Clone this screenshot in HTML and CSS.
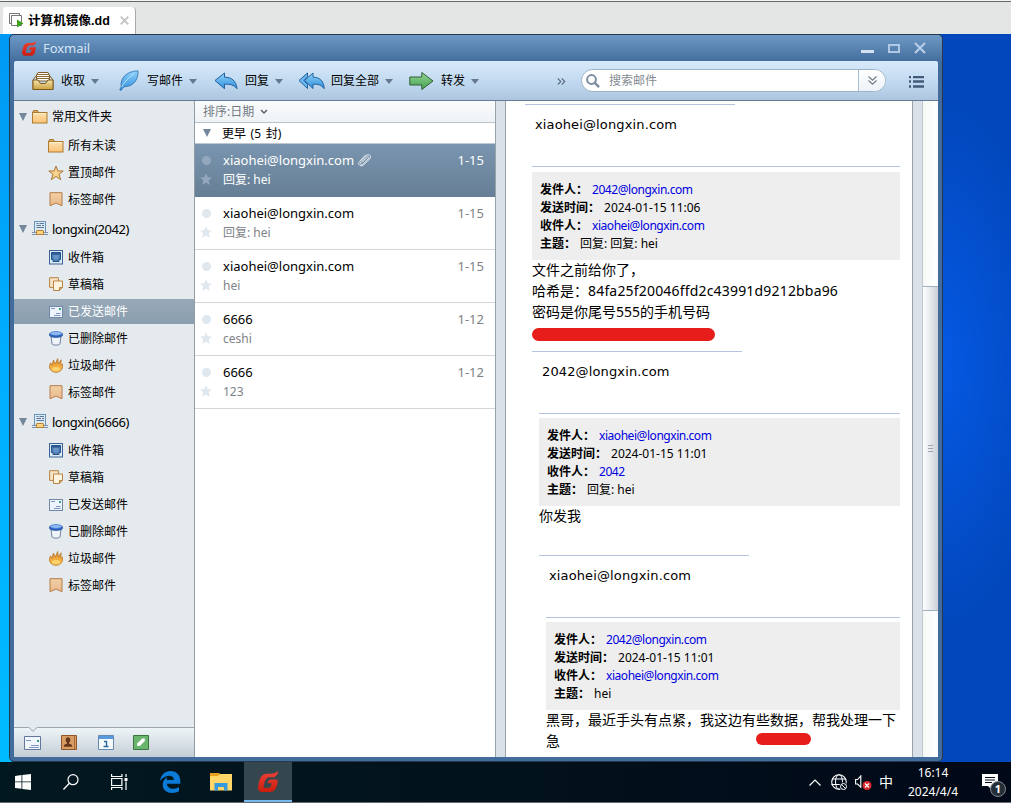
FILE: index.html
```html
<!DOCTYPE html>
<html lang="zh-CN">
<head>
<meta charset="utf-8">
<title>Foxmail</title>
<link rel="stylesheet" href="styles.css">
</head>
<body>
<svg class="defs" aria-hidden="true">
  <defs>
    <linearGradient id="gGold" x1="0" y1="0" x2="0" y2="1"><stop offset="0" stop-color="#fbe3b4"/><stop offset="1" stop-color="#fbc272"/></linearGradient>
    <linearGradient id="gTray" x1="0" y1="0" x2="0" y2="1"><stop offset="0" stop-color="#f3e3ac"/><stop offset="1" stop-color="#cda343"/></linearGradient>
    <linearGradient id="gBlue" x1="0" y1="0" x2="0" y2="1"><stop offset="0" stop-color="#8fd2fa"/><stop offset="1" stop-color="#2f8fdc"/></linearGradient>
    <linearGradient id="gGreen" x1="0" y1="0" x2="0" y2="1"><stop offset="0" stop-color="#94d594"/><stop offset="1" stop-color="#45a050"/></linearGradient>
    <linearGradient id="gTag" x1="0" y1="0" x2="0" y2="1"><stop offset="0" stop-color="#f1d0a4"/><stop offset="1" stop-color="#eab98d"/></linearGradient>
    <linearGradient id="gRed" x1="0" y1="0" x2="0" y2="1"><stop offset="0" stop-color="#ef4338"/><stop offset="1" stop-color="#c91c0c"/></linearGradient>
    <linearGradient id="gFire" x1="0" y1="0" x2="0" y2="1"><stop offset="0" stop-color="#d28a28"/><stop offset=".5" stop-color="#f2a83c"/><stop offset="1" stop-color="#fbc34f"/></linearGradient>
  </defs>
  <symbol id="fox" viewBox="0 0 20 21"><path fill="url(#gRed)" d="M20 0Q20.200 4 16.500 6.200H10.500Q8 7 6.800 10.500L5.600 15Q5.500 16.800 7 16.800H11Q12.800 16.600 13.600 12.300H9.500Q10 8.600 12.800 8.600H18.500Q20 8.700 19.700 10.500 18.600 21 12.500 21H3.500Q-.4 20.300.1 15.500 1.500 3 8 2.700H13.500Q17.500 2.500 20 0z"/></symbol>
  <symbol id="folder" viewBox="0 0 16 14"><path d="M1 2.500V1.500Q1 .5 2 .5H5.500L6.500 2.500z" fill="#dba95c" stroke="#a97a31"/><rect x=".5" y="2.500" width="14.500" height="10.500" fill="url(#gGold)" stroke="#ad7a2f"/><path d="M1.500 3.500h12.500" stroke="#fff0cd"/></symbol>
  <symbol id="star" viewBox="0 0 16 16"><path d="M8 1l1.900 5h5.300l-4.200 3.400 1.700 5.300L8 11.500l-4.700 3.200L5 9.400.8 6h5.300z" fill="#f8d18b" stroke="#a9793a"/></symbol>
  <symbol id="tag" viewBox="0 0 14 15"><path d="M1 .7h12v13l-6-2.600-6 2.600z" fill="url(#gTag)" stroke="#b77c49"/></symbol>
  <symbol id="account" viewBox="0 0 16 15"><rect x="2.500" y=".5" width="11" height="11" fill="#d9ebf8" stroke="#6b93b5"/><path d="M4.500 2.500h2M7.500 2.500H12M4.500 4.500H9M10 4.500h2M4.500 6.500H12" stroke="#5e7590"/><path d="M0 11.500h16M0 13.500h16" stroke="#7a92a9"/><rect x="4.500" y="9.500" width="7" height="4" rx=".6" fill="#ffd482" stroke="#c17d23"/></symbol>
  <symbol id="inbox" viewBox="0 0 14 15"><rect x=".5" y=".5" width="13" height="13.500" fill="#dceaf7" stroke="#3a6295"/><path d="M2.500 2.500h9v7H10v2H4v-2H2.500z" fill="#4a7ab0" stroke="#24528b"/><path d="M3 3h8v1.500H3z" fill="#2c5b94"/><path d="M4.500 5h5v4.500h-5z" fill="#6895c6"/></symbol>
  <symbol id="draft" viewBox="0 0 14 15"><path d="M.6.700h8.800v9.700H.6z" fill="#f6e4c5" stroke="#b78342"/><path d="M4.500 4h9v6.500l-3 3h-6z" fill="#fff4df" stroke="#b78342"/><path d="M13.300 10.500h-2.800v3" fill="#ddb074" stroke="#b78342"/></symbol>
  <symbol id="sent" viewBox="0 0 14 12"><rect x=".5" y=".5" width="13" height="11" fill="#edf4fb" stroke="#7187a8"/><path d="M2 2.500h4M7 7.500h4.500M5 9.500h6.500" stroke="#8094bc"/><path d="M10 2h2v2h-2z" fill="#3b9f80"/></symbol>
  <symbol id="trash" viewBox="0 0 14 15"><path d="M2 5l1 8c1 1.500 7 1.500 8 0l1-8z" fill="#eef4f9" stroke="#71859c"/><path d="M.7 2.500v2.300c2 2 10.600 2 12.600 0V2.500z" fill="#2c61bf" stroke="#315fab"/><ellipse cx="7" cy="2.500" rx="6" ry="1.900" fill="#91bdf5" stroke="#3f74c8" stroke-width=".8"/></symbol>
  <symbol id="fire" viewBox="0 0 14 15"><path d="M2.700 13C-.2 10.300.1 7.700 1.600 4.800l1.600 2.600L4.400 2l2 4L8.700.5l.6 5.400 2.900-4.100-.5 4.700 1.700-.5c.6 2.500.1 5.200-2.100 7-2.300 1.700-6.300 1.700-8.600 0z" fill="url(#gFire)" stroke="#b8772b" stroke-width=".8"/><ellipse cx="7" cy="11" rx="4" ry="2" fill="#ffd36e"/></symbol>
  <symbol id="reply" viewBox="0 0 24 20"><path d="M1 9.500L10.500 2v4.200c7 0 11.500 3.300 12.500 11.500-3.300-4-7-4.700-12.500-4.500v4.500z" fill="url(#gBlue)" stroke="#22619f" stroke-linejoin="round"/></symbol>
  <symbol id="mstar" viewBox="0 0 12 12"><path d="M6 0l1.700 4.200 4.300.2-3.300 2.800L9.800 12 6 9.400 2.200 12l1.100-4.800L0 4.400l4.300-.2z" fill="currentColor"/></symbol>
</svg>

<header class="vm-tabs">
  <div class="vm-tab">
    <svg width="15" height="15" viewBox="0 0 15 15"><path d="M2.500 10.500h-2V.5h10v2M2.500 2.500h10v10h-10z" fill="#fff" stroke="#777"/><path d="M3.500 3.500h8v8h-8z" fill="#fff"/><path d="M8 6.500l6.500 4L8 14.500z" fill="#3ea11c"/></svg>
    <span class="vm-name">计算机镜像.dd</span>
    <svg class="vm-close" width="9" height="9" viewBox="0 0 9 9"><path d="M.7.700l7.600 7.600M8.300.7L.7 8.300" stroke="#c4c4c4" stroke-width="1.900"/></svg>
  </div>
</header>

<main class="desktop">
  <div class="window">
    <div class="titlebar">
      <svg width="14" height="15"><use href="#fox"/></svg>
      <span class="title">Foxmail</span>
      <svg class="win-buttons" width="67" height="14" viewBox="0 0 67 14"><path d="M1 9h13v3H1z" fill="#d4e1f0"/><path d="M29 4h10v7H29z" fill="none" stroke="#afc8e4" stroke-width="2"/><path d="M55 2l10 10M65 2L55 12" stroke="#b7cde6" stroke-width="2.200"/></svg>
    </div>
    <div class="toolbar">
      <div class="tool t1"><svg width="22" height="20" viewBox="0 0 22 20"><path d="M4.500 10V4L6 1.500h10L17.500 4v6z" fill="#fff" stroke="#805d25"/><path d="M5 3.500h12M4 5.500h14M4 7.500h14" stroke="#8d6c34"/><path d="M4 5L1 9v9.500h20V9l-3-4" fill="none" stroke="#80591d"/><path d="M1 9h5l2.500 3.500h5L16 9h5v9.500H1z" fill="url(#gTray)" stroke="#80591d"/></svg><span>收取</span><i></i></div>
      <div class="tool t2"><svg width="20" height="21" viewBox="0 0 20 21"><path d="M2.200 17C.8 8.500 7.200 1.200 19 .8c.6 8-4 15.200-12 15.700-2.100.2-3.500 1.500-4.600 3.800L.8 20c.6-1.700 1-2.200 1.400-3z" fill="url(#gBlue)" stroke="#2a6da9" stroke-width=".8"/><path d="M2.500 17C6 11 10.500 7 15 3.500" stroke="#c4e8ff" stroke-width=".9" fill="none"/></svg><span>写邮件</span><i></i></div>
      <div class="tool t3"><svg width="24" height="20"><use href="#reply"/></svg><span>回复</span><i></i></div>
      <div class="tool t4"><svg width="27" height="20" viewBox="0 0 27 20"><path d="M1 9.500L9.500 2v3.700L6 9.500l3.500 4v4z" fill="#69b7ee" stroke="#22619f" stroke-linejoin="round"/><path d="M6.500 9.500L15 2v4.200c6.500 0 10.500 3.300 11.300 11.500-3-3.800-6-4.700-11.300-4.500v4.300z" fill="url(#gBlue)" stroke="#22619f" stroke-linejoin="round"/></svg><span>回复全部</span><i></i></div>
      <div class="tool t5"><svg width="25" height="20" viewBox="0 0 25 20"><path d="M.8 6h12V1.500L24 10l-11.200 8.500V14H.8z" fill="url(#gGreen)" stroke="#315f36" stroke-linejoin="round"/></svg><span>转发</span><i></i></div>
      <svg class="more" width="9" height="7" viewBox="0 0 9 7"><path d="M.8.500l3 3-3 3M4.800.5l3 3-3 3" fill="none" stroke="#5b6b80" stroke-width="1.100"/></svg>
      <div class="search">
        <svg width="14" height="14" viewBox="0 0 14 14"><circle cx="5.500" cy="5.500" r="4.400" fill="none" stroke="#7d8da0" stroke-width="2"/><path d="M8.800 8.800l4.300 4.300" stroke="#7d8da0" stroke-width="2.400"/></svg>
        <span>搜索邮件</span>
        <b><svg width="9" height="9" viewBox="0 0 9 9"><path d="M.5.500l4 3.700 4-3.700M.5 4.500l4 3.700 4-3.700" fill="none" stroke="#737d8a" stroke-width="1.200"/></svg></b>
      </div>
      <svg class="menu" width="15" height="12" viewBox="0 0 15 12"><path d="M0 1h2M4 1h11M0 5.500h2M4 5.500h11M0 10.500h2M4 10.500h11" stroke="#435a78" stroke-width="2.400"/></svg>
    </div>

    <div class="content">
      <aside class="sidebar">
        <div class="tree">
          <div class="group"><i></i><svg width="16" height="14"><use href="#folder"/></svg><span>常用文件夹</span></div>
          <div class="item"><svg width="16" height="14"><use href="#folder"/></svg><span>所有未读</span></div>
          <div class="item"><svg width="16" height="16"><use href="#star"/></svg><span>置顶邮件</span></div>
          <div class="item"><svg width="14" height="15"><use href="#tag"/></svg><span>标签邮件</span></div>
          <div class="group"><i></i><svg width="16" height="15"><use href="#account"/></svg><span class="acct">longxin(2042)</span></div>
          <div class="item"><svg width="14" height="15"><use href="#inbox"/></svg><span>收件箱</span></div>
          <div class="item"><svg width="14" height="15"><use href="#draft"/></svg><span>草稿箱</span></div>
          <div class="item selected"><svg width="14" height="12"><use href="#sent"/></svg><span>已发送邮件</span></div>
          <div class="item"><svg width="14" height="15"><use href="#trash"/></svg><span>已删除邮件</span></div>
          <div class="item"><svg width="14" height="15"><use href="#fire"/></svg><span>垃圾邮件</span></div>
          <div class="item"><svg width="14" height="15"><use href="#tag"/></svg><span>标签邮件</span></div>
          <div class="group"><i></i><svg width="16" height="15"><use href="#account"/></svg><span class="acct">longxin(6666)</span></div>
          <div class="item"><svg width="14" height="15"><use href="#inbox"/></svg><span>收件箱</span></div>
          <div class="item"><svg width="14" height="15"><use href="#draft"/></svg><span>草稿箱</span></div>
          <div class="item"><svg width="14" height="12"><use href="#sent"/></svg><span>已发送邮件</span></div>
          <div class="item"><svg width="14" height="15"><use href="#trash"/></svg><span>已删除邮件</span></div>
          <div class="item"><svg width="14" height="15"><use href="#fire"/></svg><span>垃圾邮件</span></div>
          <div class="item"><svg width="14" height="15"><use href="#tag"/></svg><span>标签邮件</span></div>
        </div>
        <nav class="modes">
          <svg class="notch" width="10" height="5" viewBox="0 0 10 5"><path d="M0 0l5 4.500L10 0z" fill="#e5eaee"/><path d="M.5 0L5 4.300 9.500 0" fill="none" stroke="#9aa5ae"/></svg>
          <svg width="18" height="14" viewBox="0 0 18 14"><path d="M.5.500h16v13H.5z" fill="#eff6fc" stroke="#627799"/><path d="M2 4.500h5M7 9.500h8M5 11.500h10" stroke="#8197bf"/><path d="M13 4h2v2h-2z" fill="#38997b"/></svg>
          <svg width="17" height="15" viewBox="0 0 17 15"><path d="M.5.500h15v14H.5z" fill="#d99d64" stroke="#90562a"/><path d="M13.500 1v13" stroke="#a66c38"/><ellipse cx="7" cy="5" rx="2.300" ry="2.700" fill="#66371c"/><path d="M6 7h2v2H6zM2.700 11.700c0-2.300 2-3.200 4.300-3.200s4.300.9 4.300 3.200z" fill="#66371c"/></svg>
          <svg width="16" height="15" viewBox="0 0 16 15"><path d="M.5.500h15v14H.5z" fill="#f5faff" stroke="#6689b0"/><path d="M1 1h14v3H1z" fill="#5999dd"/><path d="M6 6.500h2.500v5.500M5.500 11.500h5" fill="none" stroke="#2e6896" stroke-width="1.400"/></svg>
          <svg width="16" height="15" viewBox="0 0 16 15"><path d="M.5.500h15v14H.5z" fill="#6ab56d" stroke="#39773e"/><path d="M4.200 11V8.500l5-5h2.600V6l-5 5z" fill="#fff"/></svg>
        </nav>
      </aside>

      <section class="list">
        <div class="sort"><span>排序:日期</span><svg width="8" height="6" viewBox="0 0 8 6"><path d="M1 1l3 3 3-3" fill="none" stroke="#59636e" stroke-width="1.500"/></svg></div>
        <div class="earlier"><i></i><span>更早 (5 封)</span></div>
        <article class="mail active">
          <em></em><div class="from"><span>xiaohei@longxin.com</span><svg width="14" height="14" viewBox="0 0 14 14"><path d="M4 9.500l5-5.200c1.200-1.100 2.500.2 1.500 1.300L5.300 11c-1.700 1.600-4-.3-2.200-2.300L8.300 2.800C10.800.3 14.200 3 11.800 5.800l-6 6C3 14.500-1 11.500 1.500 8.500l6.500-7" fill="none" stroke="#e8eef4"/></svg></div><time>1-15</time>
          <svg class="ms" width="12" height="12"><use href="#mstar"/></svg><p>回复: hei</p>
        </article>
        <article class="mail"><em></em><div class="from"><span>xiaohei@longxin.com</span></div><time>1-15</time><svg class="ms" width="12" height="12"><use href="#mstar"/></svg><p>回复: hei</p></article>
        <article class="mail"><em></em><div class="from"><span>xiaohei@longxin.com</span></div><time>1-15</time><svg class="ms" width="12" height="12"><use href="#mstar"/></svg><p>hei</p></article>
        <article class="mail"><em></em><div class="from"><span>6666</span></div><time>1-12</time><svg class="ms" width="12" height="12"><use href="#mstar"/></svg><p>ceshi</p></article>
        <article class="mail"><em></em><div class="from"><span>6666</span></div><time>1-12</time><svg class="ms" width="12" height="12"><use href="#mstar"/></svg><p>123</p></article>
      </section>

      <div class="splitter"></div>

      <section class="reader">
        <div class="signature">xiaohei@longxin.com</div>
        <div class="quote first">
          <div class="head">
            <div><b>发件人：</b><a>2042@longxin.com</a></div>
            <div><b>发送时间：</b><span>2024-01-15 11:06</span></div>
            <div><b>收件人：</b><a>xiaohei@longxin.com</a></div>
            <div><b>主题：</b><span>回复: 回复: hei</span></div>
          </div>
          <div class="body">文件之前给你了，<br>哈希是：<span class="hash">84fa25f20046ffd2c43991d9212bba96</span><br>密码是你尾号555的手机号码<span class="redact wide"></span></div>
          <div class="signature">2042@longxin.com</div>
          <div class="quote">
            <div class="head">
              <div><b>发件人：</b><a>xiaohei@longxin.com</a></div>
              <div><b>发送时间：</b><span>2024-01-15 11:01</span></div>
              <div><b>收件人：</b><a>2042</a></div>
              <div><b>主题：</b><span>回复: hei</span></div>
            </div>
            <div class="body">你发我</div>
            <div class="signature">xiaohei@longxin.com</div>
            <div class="quote">
              <div class="head">
                <div><b>发件人：</b><a>2042@longxin.com</a></div>
                <div><b>发送时间：</b><span>2024-01-15 11:01</span></div>
                <div><b>收件人：</b><a>xiaohei@longxin.com</a></div>
                <div><b>主题：</b><span>hei</span></div>
              </div>
              <div class="body">黑哥，最近手头有点紧，我这边有些数据，帮我处理一下<br>急<span class="redact short"></span></div>
            </div>
          </div>
        </div>
      </section>

      <div class="splitter right"></div>
      <div class="scrollbar"><div class="thumb"><svg width="5" height="7" viewBox="0 0 5 7"><path d="M0 .5h5M0 3.500h5M0 6.500h5" stroke="#9aa5ad"/></svg></div></div>
    </div>
  </div>
</main>

<footer class="taskbar">
  <div class="task start"><svg width="16" height="16" viewBox="0 0 16 16"><path d="M0 2l6.500-.9v6.400H0zM7.300 1L16 0v7.500H7.300zM0 8.300h6.500v6.400L0 13.900zM7.300 8.300H16V16l-8.700-1.100z" fill="#fff"/></svg></div>
  <div class="task search-task"><svg width="16" height="16" viewBox="0 0 16 16"><circle cx="10" cy="5.700" r="5" fill="none" stroke="#fff" stroke-width="1.200"/><path d="M6.400 9.300L.4 15.500" stroke="#fff" stroke-width="1.300"/></svg></div>
  <div class="task"><svg width="17" height="16" viewBox="0 0 17 16"><path d="M.6 0v2.500h10.300V0M.6 16v-2.500h10.300V16M.6 4.500h10.300v7H.6z" fill="none" stroke="#fff" stroke-width="1.200"/><path d="M15 0v3M15 7.500V16" stroke="#fff" stroke-width="1.200"/><path d="M13.500 4h3v3h-3z" fill="#fff"/></svg></div>
  <div class="task edge"><svg width="21" height="22" viewBox="0 0 21 22"><path d="M0 9.800C.8 4 5 0 10.500 0 17 0 20.300 4.800 20.300 9.800v3H7c.2 5.800 7.800 6 12 3.200V20.200C12.500 23.700 3 22 2.700 14c-.1-3.700 1.900-6.400 4.900-7.900-.8 1.100-1 2.100-1 3h7.300c.1-6-8.400-5.900-13.900.7z" fill="#0c7ad7"/></svg></div>
  <div class="task explorer"><svg width="22" height="18" viewBox="0 0 22 18"><path d="M0 0h8.500l1.500 1h12v16.500H0z" fill="#ffd667"/><path d="M0 0h8.500l1.500 1-2 2H0z" fill="#e5a11d"/><path d="M4.500 17.500V10h13v7.500H14V14H8v3.500z" fill="#3599dd"/></svg></div>
  <div class="task active"><svg width="20" height="21"><use href="#fox"/></svg></div>
  <div class="tray">
    <svg class="chev" width="12" height="7" viewBox="0 0 12 7"><path d="M.5 6.500L6 1l5.500 5.500" fill="none" stroke="#fff" stroke-width="1.200"/></svg>
    <svg class="globe" width="17" height="17" viewBox="0 0 17 17"><circle cx="8" cy="8" r="7.300" fill="none" stroke="#fff" stroke-width="1.100"/><ellipse cx="8" cy="8" rx="3.500" ry="7.300" fill="none" stroke="#fff"/><path d="M1 5h14M.5 10.500h15" stroke="#fff"/><circle cx="12.500" cy="12.500" r="4.200" fill="#020d1b"/><circle cx="12.500" cy="12.500" r="3" fill="none" stroke="#fff"/><path d="M10.500 10.500l4 4" stroke="#fff"/></svg>
    <svg class="sound" width="17" height="15" viewBox="0 0 17 15"><path d="M.6 4.500h2l3.200-3.600v11.200L2.600 9H.6z" fill="none" stroke="#fff" stroke-width="1.100"/><circle cx="12" cy="10.500" r="4.500" fill="#d9282d"/><path d="M10 8.500l4 4M14 8.500l-4 4" stroke="#fff" stroke-width="1.200"/></svg>
    <span class="ime">中</span>
    <div class="clock"><span>16:14</span><span>2024/4/4</span></div>
    <div class="notice"><svg width="16" height="16" viewBox="0 0 16 16"><path d="M0 0h16v12h-6v4l-4-4H0z" fill="#fff"/><path d="M3 3.500h10M3 6h10M3 8.500h7" stroke="#020d1b" stroke-width="1.200"/></svg><b>1</b></div>
  </div>
</footer>
</body>
</html>
```
FILE: styles.css
```css
* { box-sizing: border-box; }
body { margin: 0; width: 1011px; height: 803px; overflow: hidden; display: flex; flex-direction: column; font: 12px/18px "Noto Sans", "Noto Sans CJK SC", sans-serif; color: #000; white-space: nowrap; }
.defs { position: absolute; width: 0; height: 0; }
svg { flex: none; display: block; }
p { margin: 0; }

.vm-tabs { height: 34px; flex: none; background: linear-gradient(#f4f4f4 1px, #666 1px, #666 2px, #e4e5e5 2px); padding: 7px 0 0 3px; }
.vm-tab { width: 133px; height: 27px; background: #fff; border-right: 1px solid #aaa; border-radius: 3px 4px 0 0; display: flex; align-items: center; padding-left: 6px; }
.vm-name { margin-left: 4px; width: 82px; font: 700 12.500px/18px "Liberation Sans", "Noto Sans CJK SC", sans-serif; letter-spacing: .1px; padding-top: 1px; }
.vm-close { margin-left: 10px; }

.desktop { height: 728px; flex: none; padding-left: 9px; background: radial-gradient(ellipse 110px 270px at 941px 330px, #0559e4, rgba(3,72,190,0)), linear-gradient(90deg, transparent 12px, #0247bb 12px), linear-gradient(#0099f3, #00aeff 45%, #00bbff); }
.window { width: 934px; height: 728px; border: 1px solid #26384d; border-radius: 5px; padding: 0 4px 4px; overflow: hidden; background: linear-gradient(#6e98c5, #446e9d 26px, #426c9c 27px); }
.titlebar { height: 26px; display: flex; align-items: center; padding: 0 11px 0 8px; }
.title { flex: 1; margin-left: 7px; font-size: 13px; color: #d4e4f4; letter-spacing: -.05px; padding-bottom: 1px; }
.toolbar { height: 40px; background: linear-gradient(#d8eafa, #bed7ee 60%, #aec5df); border-bottom: 1px solid #667b96; border-radius: 2px 2px 0 0; display: flex; align-items: center; }
.tool { display: flex; align-items: center; height: 39px; }
.tool i, .group i, .earlier i { width: 0; height: 0; border: 4px solid transparent; border-top: 5px solid #65788f; border-bottom: 0; }
.tool i { margin: 2px 0 0 6px; }
.t1 { margin-left: 18px; } .t1 span { margin-left: 7px; }
.t2 { margin-left: 20px; } .t2 span { margin-left: 8px; }
.t3 { margin-left: 17px; } .t3 span { margin-left: 7px; }
.t4 { margin-left: 15px; } .t4 span { margin-left: 6px; }
.t5 { margin-left: 16px; } .t5 span { margin-left: 7px; }
.more { margin: 2px 0 0 78px; }
.search { margin-left: 15px; width: 305px; height: 23px; border: 1px solid #9db4c8; border-radius: 12px; background: #fff; overflow: hidden; display: flex; align-items: center; padding-left: 4px; color: #858b91; }
.search span { margin-left: 9px; flex: 1; }
.search b { width: 27px; height: 21px; border-left: 1px solid #a9bccb; background: linear-gradient(#fff, #edf3f8); display: flex; align-items: center; justify-content: center; }
.menu { margin: 2px 0 0 23px; }

.content { height: 656px; display: flex; background: #fff; }
.sidebar { width: 181px; border-right: 1px solid #929da5; background: #e5eaee; display: flex; flex-direction: column; }
.tree { flex: 1; display: flex; flex-direction: column; }
.group { height: 31px; display: flex; align-items: center; padding-left: 5px; }
.group i, .earlier i { border-width: 8px 4.500px 0; border-top-color: #75879a; }
.group i { margin-right: 4px; }
.group svg { margin-left: 1px; }
.group svg + span { margin-left: 4px; }
.acct { font-size: 13px; letter-spacing: -.48px; }
.item { height: 25px; margin: 1px 0; display: flex; align-items: center; padding-left: 34px; }
.item svg { margin-right: 4px; }
.item svg[width="14"] { margin: 0 5px 0 1px; }
.selected { color: #fff; background: linear-gradient(#97a9b9, #8a9eaf); }
.modes { position: relative; height: 30px; border-top: 1px solid #9ba6ad; background: linear-gradient(#eef5f8, #c4ced6); display: flex; align-items: center; gap: 19.400px; padding-left: 10px; }
.notch { position: absolute; left: 14px; top: -1px; }

.list { width: 300px; background: #fff; }
.sort { height: 22px; display: flex; align-items: center; padding-left: 8px; gap: 6px; color: #737b83; background: linear-gradient(#fafbfc, #eff3f6); border-bottom: 1px solid #bac3c9; }
.earlier { height: 21px; display: flex; align-items: center; padding-left: 8px; gap: 11px; border-bottom: 1px solid #bdc9d2; }
.earlier span { word-spacing: 1.500px; padding-top: 1px; }
.mail { height: 53px; padding: 6px 11px 8px 5px; display: grid; grid-template-columns: 23px 1fr auto; grid-template-rows: 20px 18px; align-items: center; border-bottom: 1px solid #d4d7d9; color: #000; }
.mail em { width: 9px; height: 9px; border-radius: 50%; background: #dfe7ef; margin-left: 2px; }
.ms { color: #dfe7ef; }
.from { display: flex; align-items: center; gap: 4px; font-size: 13px; }
.mail time { font-size: 13px; color: #7d8287; }
.mail p { color: #7d8287; padding-top: 1px; }
.active.mail { background: linear-gradient(#7a95b0, #667f96); border-color: #667f96; }
.active.mail, .active.mail time, .active.mail p { color: #fff; }
.active em { background: #93a8bd; }
.active .ms { color: #93a8bd; }

.splitter { width: 11px; background: #dae1e8; border: 1px solid #98a3a9; border-width: 0 1px; }
.reader { width: 406px; padding: 3px 12px 0 19px; overflow: hidden; }
.signature { height: 62px; position: relative; padding: 12px 0 0 10px; font: 13px/18px "DejaVu Sans", sans-serif; letter-spacing: .13px; background: linear-gradient(#b4c3df, #b4c3df) 0 0 / 210px 1px no-repeat; }
.quote { margin-left: 7px; padding-top: 4px; border-top: 1px solid #b4c3df; }
.quote.first { padding-top: 5px; }
.head { height: 88px; background: #eee; padding: 9px 8px 7px; line-height: 18px; }
.head b { margin-right: 4px; }
.head a { color: #0000e0; letter-spacing: -.45px; }
.body { position: relative; top: -1px; font-size: 14px; line-height: 21px; margin-bottom: 28px; }
.hash { letter-spacing: .18px; }
.redact { position: absolute; background: #e71d1c; border-radius: 7px; }
.wide { left: 0; top: 69px; width: 183px; height: 13px; }
.short { left: 210px; top: 24px; width: 55px; height: 12px; }
.right { border-right-color: #bfc9cc; }
.scrollbar { width: 15px; padding-top: 185px; background: linear-gradient(90deg, #f6f8f8, #fff); }
.thumb { height: 325px; border: 1px solid #9db0be; border-width: 1px 0; background: linear-gradient(90deg, #fff, #cbd1d8); display: flex; align-items: center; justify-content: center; }

.taskbar { height: 41px; flex: none; background: linear-gradient(90deg, #021820, #02111c 55%, #010817); border-bottom: 1px solid #66696b; display: flex; }
.task { width: 48px; height: 40px; display: flex; align-items: center; justify-content: center; }
.start { width: 46px; }
.search-task { width: 49px; }
.edge { width: 54px; }
.explorer { width: 47px; }
.task.active { background: #34464e; border-bottom: 2px solid #76b9ed; }
.tray { flex: 1; display: flex; align-items: center; color: #fff; padding-left: 517px; }
.globe { margin-left: 10px; }
.sound { margin-left: 7px; }
.ime { margin-left: 7px; font-size: 14px; }
.clock { width: 66px; margin-left: 7px; display: flex; flex-direction: column; align-items: center; font-size: 12px; line-height: 19px; }
.notice { position: relative; margin-left: 16px; }
.notice b { position: absolute; left: 8px; top: 7px; width: 16px; height: 16px; border: 1px solid #818991; border-radius: 50%; background: #252e37; text-align: center; font-size: 11px; line-height: 14px; }
```
